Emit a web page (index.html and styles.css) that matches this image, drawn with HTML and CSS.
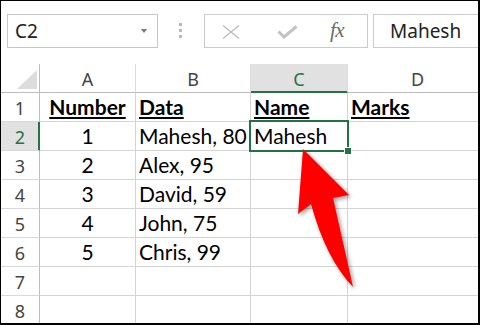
FILE: index.html
```html
<!DOCTYPE html>
<html>
<head>
<meta charset="utf-8">
<link rel="stylesheet" href="styles.css">
</head>
<body>
<div class="frame">
  <div class="toolbar">
    <div class="namebox"><span class="ref">C2</span><span class="caret"></span></div>
    <div class="grip"><i></i><i></i><i></i></div>
    <div class="fxbox">
      <svg class="ico-x" width="18" height="14" viewBox="0 0 18 14"><path d="M1 0.5 L17 13.5 M17 0.5 L1 13.5" stroke="#bdbdbd" stroke-width="1.4" fill="none"/></svg>
      <svg class="ico-ok" width="21" height="14" viewBox="0 0 21 14"><path d="M1.5 6.5 L7 12 L19.5 1.5" stroke="#c3c3c3" stroke-width="3" fill="none"/></svg>
      <span class="fx">fx</span>
    </div>
    <div class="formula">Mahesh</div>
  </div>

  <div class="sheet">
    <div class="ch corner"><span class="tri"></span></div>
    <div class="ch">A</div>
    <div class="ch">B</div>
    <div class="ch active">C</div>
    <div class="ch">D</div>

    <div class="rh">1</div>
    <div class="c ctr hd"><u>Number</u></div>
    <div class="c hd"><u>Data</u></div>
    <div class="c hd"><u>Name</u></div>
    <div class="c hd"><u>Marks</u></div>

    <div class="rh active">2</div>
    <div class="c ctr">1</div>
    <div class="c">Mahesh, 80</div>
    <div class="c selcell">Mahesh<span class="sel"><span class="handle"></span></span></div>
    <div class="c"></div>

    <div class="rh">3</div>
    <div class="c ctr">2</div>
    <div class="c">Alex, 95</div>
    <div class="c"></div>
    <div class="c"></div>

    <div class="rh">4</div>
    <div class="c ctr">3</div>
    <div class="c">David, 59</div>
    <div class="c"></div>
    <div class="c"></div>

    <div class="rh">5</div>
    <div class="c ctr">4</div>
    <div class="c">John, 75</div>
    <div class="c"></div>
    <div class="c"></div>

    <div class="rh">6</div>
    <div class="c ctr">5</div>
    <div class="c">Chris, 99</div>
    <div class="c"></div>
    <div class="c"></div>

    <div class="rh">7</div>
    <div class="c"></div>
    <div class="c"></div>
    <div class="c"></div>
    <div class="c"></div>

    <div class="rh">8</div>
    <div class="c"></div>
    <div class="c"></div>
    <div class="c"></div>
    <div class="c"></div>
  </div>

  <svg class="arrow" width="480" height="325" viewBox="0 0 480 325">
    <path d="M303 149 L298 214 L311 204 Q326 259 353 287 L333 198 L349 195 Z" fill="#ff0000"/>
  </svg>
</div>
</body>
</html>
```

FILE: styles.css
```css
* { box-sizing: border-box; }
html, body { margin: 0; padding: 0; background: #fff; }

.frame {
  width: 480px;
  height: 325px;
  border: solid #000;
  border-width: 1px 2px 2px 1px;
  position: relative;
  overflow: hidden;
  background: #fff;
}

.toolbar {
  display: flex;
  align-items: flex-start;
  padding: 13px 0 0 6px;
  height: 63px;
  font-family: "Noto Sans", sans-serif;
}

.namebox {
  width: 151px;
  height: 34px;
  border: 1px solid #c6c6c6;
  display: flex;
  align-items: center;
  padding-left: 7px;
  font-size: 19px;
  color: #222;
  flex: none;
}
.namebox .ref { line-height: 1; }
.caret {
  margin-left: auto;
  margin-right: 10px;
  width: 0;
  height: 0;
  border-left: 3.5px solid transparent;
  border-right: 3.5px solid transparent;
  border-top: 4px solid #777;
}

.grip {
  margin-left: 21px;
  padding-top: 9px;
  display: flex;
  flex-direction: column;
  gap: 3px;
  flex: none;
}
.grip i {
  display: block;
  width: 3px;
  height: 3px;
  background: #b8b8b8;
}

.fxbox {
  margin-left: 22px;
  width: 164px;
  height: 34px;
  border: 1px solid #cbcbcb;
  display: flex;
  align-items: center;
  padding-left: 17px;
  flex: none;
}
.ico-x { margin-top: 1px; flex: none; }
.ico-ok { margin-left: 37px; margin-top: 2px; flex: none; }
.fx {
  margin-left: 32px;
  font-family: "Liberation Serif", serif;
  font-style: italic;
  font-size: 21px;
  color: #6a6a6a;
  letter-spacing: -0.5px;
  margin-top: -2px;
}

.formula {
  margin-left: 5px;
  flex: 1;
  height: 34px;
  border: 1px solid #cbcbcb;
  border-right: none;
  margin-right: -10px;
  padding-left: 16px;
  display: flex;
  align-items: center;
  font-size: 19px;
  color: #222;
  line-height: 1;
}

.sheet {
  display: grid;
  grid-template-columns: 39px 96px 115px 97px 140px;
  grid-auto-rows: 29px;
}

.ch {
  border-right: 1px solid #dcdcdc;
  border-bottom: 1px solid #bdbdbd;
  font-family: "Noto Sans", sans-serif;
  font-size: 18px;
  color: #444;
  display: flex;
  align-items: center;
  justify-content: center;
  padding-top: 1px;
}
.ch.corner {
  justify-content: flex-end;
  align-items: flex-end;
  padding: 0 2px 3px 0;
  border-right-color: #bdbdbd;
}
.tri {
  width: 20px;
  height: 19px;
  background: #dcdcdc;
  clip-path: polygon(100% 0, 100% 100%, 0 100%);
}
.ch.active {
  background: #e1e1e1;
  color: #217346;
  border-bottom-color: #217346;
  box-shadow: inset 0 -1px 0 #217346;
}

.rh {
  border-right: 1px solid #bdbdbd;
  border-bottom: 1px solid #d9d9d9;
  font-family: "Noto Sans", sans-serif;
  font-size: 18px;
  color: #444;
  display: flex;
  align-items: center;
  justify-content: center;
  padding-top: 1px;
}
.rh.active {
  background: #e1e1e1;
  color: #217346;
  border-right-color: #217346;
  box-shadow: inset -1px 0 0 #217346;
}

.c {
  border-right: 1px solid #d4d4d4;
  border-bottom: 1px solid #d4d4d4;
  font-family: Lato, sans-serif;
  font-size: 21px;
  color: #000;
  display: flex;
  align-items: flex-end;
  padding: 0 3px 2px 3px;
  line-height: 25px;
  white-space: nowrap;
}
.c.ctr { justify-content: center; }
.c.hd { font-weight: bold; }
.c.hd u { text-decoration-thickness: 2px; text-underline-offset: 2px; }

.selcell { position: relative; }
.sel {
  position: absolute;
  left: -2px;
  top: -2px;
  width: 100px;
  height: 32px;
  border: 2px solid #217346;
}
.handle {
  position: absolute;
  right: -4px;
  bottom: -4px;
  width: 6px;
  height: 6px;
  background: #217346;
  box-shadow: 0 0 0 1px #fff;
}

.arrow {
  position: absolute;
  left: -1px;
  top: -1px;
  pointer-events: none;
  filter: drop-shadow(2px 2px 2px rgba(0,0,0,0.4));
}
```
